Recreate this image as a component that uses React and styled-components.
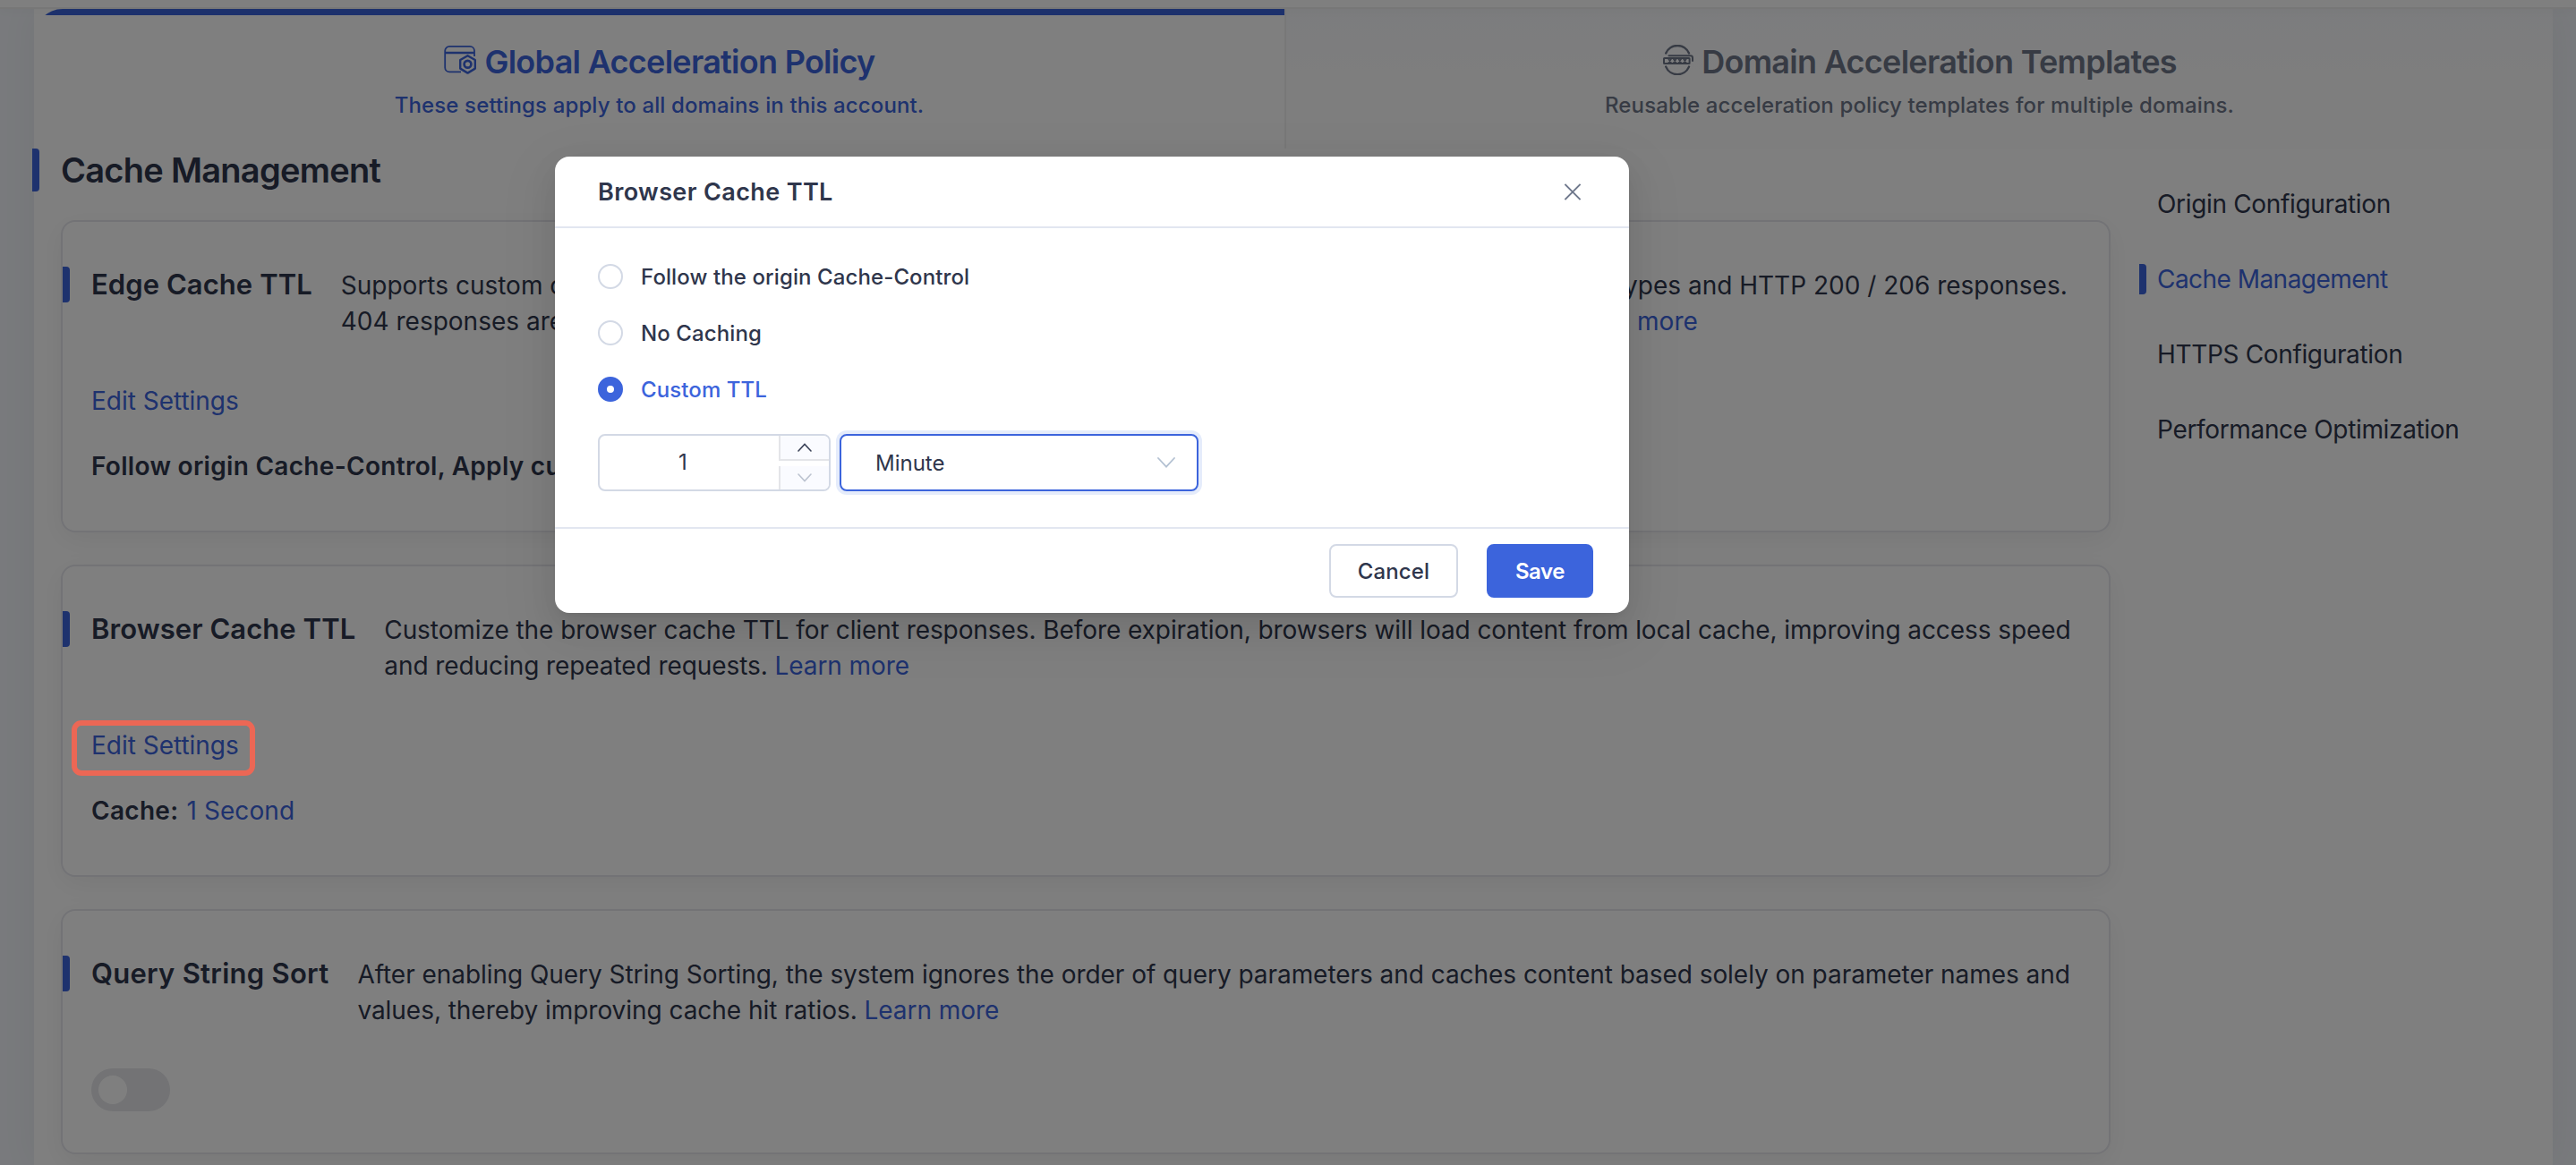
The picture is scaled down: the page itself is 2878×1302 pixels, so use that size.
import React from "react";
import styled, { createGlobalStyle } from "styled-components";

const BLUE = "#3c64dc";
const INK = "#2f364c";

const GlobalStyle = createGlobalStyle`
  *, *::before, *::after { box-sizing: border-box; }
  html, body { margin: 0; padding: 0; }
  body {
    font-family: Inter, Roboto, "Liberation Sans", sans-serif;
    color: ${INK};
    background: #f2f5fa;
    overflow: hidden;
  }
  button { font: inherit; padding: 0; cursor: pointer; }
`;

const Page = styled.div`
  position: relative;
  height: 1302px;
  overflow: hidden;
  display: flex;
  flex-direction: column;
`;

const TopStrip = styled.header`
  position: relative;
  z-index: 1;
  flex: none;
  height: 10px;
  background: #fff;
  border-bottom: 2px solid #efefef;
  box-shadow: 0 2px 12px rgba(0, 0, 0, 0.03);
`;

const Panel = styled.main`
  flex: 1;
  margin: 0 26px 0 38px;
  background: #fff;
  box-shadow: 0 0 40px rgba(0, 0, 0, 0.05);
`;

const Tabs = styled.div`
  display: grid;
  grid-template-columns: 1399px 1fr;
  height: 156px;
`;

const Tab = styled.div`
  display: flex;
  flex-direction: column;
  align-items: center;
  color: ${(p) => (p.$active ? BLUE : "#6f7789")};
  background: ${(p) => (p.$active ? "#fff" : "linear-gradient(#f8f9fc, #fcfcfd 45%, #fdfdfd)")};
  border-right: ${(p) => (p.$active ? "2px solid #f1f1f1" : "0")};
  border-top-left-radius: ${(p) => (p.$active ? "32px" : "0")};
  overflow: hidden;
`;

const TabBar = styled.div`
  align-self: stretch;
  height: 7px;
  background: ${(p) => (p.$active ? BLUE : "transparent")};
`;

const TabTitle = styled.div`
  display: flex;
  align-items: center;
  margin-top: 30px;
  height: 44px;
  gap: 8px;
  font-size: 36px;
  font-weight: 600;
  letter-spacing: -0.72px;
  white-space: nowrap;
  svg { display: block; margin-top: -4px; }
`;

const TabNote = styled.div`
  margin-top: 12px;
  line-height: 30px;
  font-size: 24px;
  font-weight: 500;
  letter-spacing: 0.13px;
  white-space: nowrap;
`;

const Body = styled.div`
  display: flex;
  align-items: flex-start;
`;

const Content = styled.section`
  width: 2320px;
  flex: none;
`;

const SectionTitle = styled.h2`
  display: flex;
  align-items: center;
  gap: 24px;
  height: 48px;
  margin: 0 0 32px -2px;
  font-size: 38px;
  font-weight: 600;
  letter-spacing: -0.73px;
  line-height: 48px;
`;

const Marker = styled.span`
  flex: none;
  width: 8px;
  height: ${(p) => p.$h}px;
  background: ${BLUE};
  border-radius: 0 4px 4px 0;
`;

const CardList = styled.div`
  display: flex;
  flex-direction: column;
  gap: 36px;
  margin-left: 30px;
`;

const Card = styled.article`
  background: #fff;
  border: 2px solid #e6e7ed;
  border-radius: 16px;
  padding: 50px 0 46px;
  box-shadow: 0 8px 30px rgba(0, 0, 0, 0.06);
`;

const CardHead = styled.div`
  display: flex;
  align-items: flex-start;
  height: 80px;
  margin-bottom: 46px;
`;

const CardTitle = styled.h3`
  margin: 0 32px 0 24px;
  font-size: 31px;
  line-height: 40px;
  font-weight: 600;
  letter-spacing: ${(p) => p.$track || 0}px;
  white-space: nowrap;
`;

const CardText = styled.p`
  margin: 1px 0 0;
  width: ${(p) => p.$w}px;
  font-size: 28px;
  line-height: 40px;
  letter-spacing: ${(p) => p.$track || 0}px;
  white-space: nowrap;
`;

const SplitLine = styled.span`
  display: flex;
  justify-content: space-between;
  width: ${(p) => p.$w}px;
`;

const Link = styled.a`
  color: ${BLUE};
`;

const CardBody = styled.div`
  padding-left: 32px;
  font-size: 28px;
`;

const Action = styled.div`
  display: flex;
  align-items: center;
  height: 48px;
  color: ${BLUE};
  letter-spacing: -0.02px;
`;

const Summary = styled.div`
  display: flex;
  align-items: center;
  gap: 9px;
  height: 51px;
  margin-top: 24px;
  padding-bottom: 2px;
  white-space: nowrap;
  b { font-weight: 600; letter-spacing: 0.3px; }
  span { color: ${BLUE}; letter-spacing: 0.08px; }
`;

const Toggle = styled.div`
  width: 88px;
  height: 48px;
  padding: 8px;
  border-radius: 24px;
  background: #e6e7ea;
  &::before {
    content: "";
    display: block;
    width: 32px;
    height: 32px;
    border-radius: 50%;
    background: #fff;
  }
`;

const SideNav = styled.nav`
  display: flex;
  flex-direction: column;
  margin: 20px 0 0 32px;
`;

const NavItem = styled.div`
  display: flex;
  align-items: center;
  gap: 12px;
  height: 84px;
  font-size: 28px;
  letter-spacing: ${(p) => (p.$active ? -0.54 : -0.34)}px;
  color: ${(p) => (p.$active ? BLUE : INK)};
  ${Marker} { visibility: ${(p) => (p.$active ? "visible" : "hidden")}; }
`;

const Mask = styled.div`
  position: absolute;
  inset: 0;
  z-index: 10;
  display: flex;
  align-items: flex-start;
  background: rgba(0, 0, 0, 0.5);
`;

const Highlight = styled.div`
  position: absolute;
  left: 80px;
  top: 805px;
  width: 205px;
  height: 62px;
  border: 6px solid #ec6755;
  border-radius: 11px;
`;

const Dialog = styled.div`
  width: 1200px;
  margin: 175px 0 0 620px;
  background: #fff;
  border-radius: 16px;
  box-shadow: 0 12px 32px rgba(0, 0, 0, 0.08), 0 6px 12px -8px rgba(0, 0, 0, 0.12),
    0 18px 56px 16px rgba(0, 0, 0, 0.05);
`;

const DialogHead = styled.div`
  display: flex;
  align-items: center;
  justify-content: space-between;
  height: 80px;
  padding: 0 52px 0 48px;
  border-bottom: 2px solid #e2e6f0;
  font-size: 27px;
  font-weight: 600;
  letter-spacing: 0.38px;
`;

const CloseButton = styled.button`
  display: flex;
  border: 0;
  background: none;
`;

const DialogBody = styled.div`
  height: 334px;
  padding: 38px 48px 0;
`;

const Radio = styled.label`
  display: flex;
  align-items: center;
  gap: 20px;
  height: 32px;
  margin-bottom: 31px;
  font-size: 24px;
  font-weight: 500;
  letter-spacing: 0.1px;
  color: ${(p) => (p.$on ? BLUE : INK)};
`;

const Dot = styled.span`
  width: 28px;
  height: 28px;
  border-radius: 50%;
  border: ${(p) => (p.$on ? `10px solid ${BLUE}` : "2px solid #d3d9e5")};
  background: #fff;
`;

const Fields = styled.div`
  display: flex;
  gap: 10px;
  margin-top: 34px;
`;

const NumberField = styled.div`
  display: flex;
  width: 260px;
  height: 64px;
  border: 2px solid #d3d9e5;
  border-radius: 8px;
  overflow: hidden;
`;

const NumberValue = styled.div`
  flex: 1;
  padding-right: 14px;
  line-height: 60px;
  text-align: center;
  font-size: 24px;
`;

const Steps = styled.div`
  display: flex;
  flex-direction: column;
  justify-content: space-between;
  width: 56px;
`;

const Step = styled.div`
  display: flex;
  align-items: center;
  justify-content: center;
  height: ${(p) => (p.$up ? 28 : 26)}px;
  background: #fafbff;
  border-left: 2px solid #e4e5e9;
  border-bottom: ${(p) => (p.$up ? "2px solid #e4e5e9" : "0")};
`;

const Select = styled.div`
  display: flex;
  align-items: center;
  justify-content: space-between;
  width: 401px;
  height: 64px;
  padding: 0 24px 0 38px;
  border: 2px solid ${BLUE};
  border-radius: 8px;
  box-shadow: 0 0 0 4px #e5ecfb;
  font-size: 24px;
`;

const DialogFoot = styled.div`
  display: flex;
  justify-content: flex-end;
  gap: 32px;
  height: 96px;
  padding: 17px 40px 0;
  border-top: 2px solid #e2e6f0;
`;

const Button = styled.button`
  width: ${(p) => (p.$primary ? 119 : 144)}px;
  height: 60px;
  border-radius: 8px;
  border: 2px solid ${(p) => (p.$primary ? BLUE : "#d3d9e5")};
  background: ${(p) => (p.$primary ? BLUE : "#fff")};
  color: ${(p) => (p.$primary ? "#fff" : INK)};
  font-size: 24px;
  font-weight: ${(p) => (p.$primary ? 600 : 500)};
  letter-spacing: ${(p) => (p.$primary ? -0.4 : 0.13)}px;
`;

const PolicyIcon = () => (
  <svg width="38" height="34" viewBox="0 0 38 34" fill="none" stroke="currentColor">
    <path d="M20 30.4H7.2A5 5 0 0 1 2.2 25.4V6.8A5 5 0 0 1 7.2 1.8H30A5 5 0 0 1 35 6.8V13" strokeWidth="1.8" />
    <path d="M2.2 9H35" strokeWidth="2.4" />
    <path d="M27.5 12.2L35.8 17V26.6L27.5 31.6L19.2 26.6V17Z" strokeWidth="2.4" strokeLinejoin="round" />
    <circle cx="27.5" cy="21.8" r="3.9" strokeWidth="2.7" />
  </svg>
);

const TemplateIcon = () => (
  <svg width="36" height="34" viewBox="0 0 36 34" fill="none" stroke="currentColor">
    <path d="M4.2 9.5A14 14 0 0 1 30 9.5M4.2 24.6A14 14 0 0 0 30 24.6" strokeWidth="2.4" strokeLinecap="round" />
    <path d="M7.5 12.3H31.6Q34 12.3 34 14.7V18" strokeWidth="2" strokeLinecap="round" />
    <rect x="2" y="15" width="28.6" height="6" rx="0.6" strokeWidth="2" />
    <path d="M7 15.8L10.2 20.4M10.2 15.8L7 20.4M12.6 15.8L15.8 20.4M15.8 15.8L12.6 20.4M18.2 15.8L21.4 20.4M21.4 15.8L18.2 20.4M23.8 15.8L27 20.4M27 15.8L23.8 20.4" strokeWidth="1.6" />
  </svg>
);

const Chevron = ({ up, w, h, color, stroke = 1.6 }) => (
  <svg width={w} height={h} viewBox={`0 0 ${w} ${h}`} fill="none" stroke={color} strokeWidth={stroke}>
    <path d={up ? `M1 ${h - 1}L${w / 2} 1.4L${w - 1} ${h - 1}` : `M1 1L${w / 2} ${h - 1.4}L${w - 1} 1`} strokeLinecap="round" />
  </svg>
);

const NAV = ["Origin Configuration", "Cache Management", "HTTPS Configuration", "Performance Optimization"];
const RADIOS = ["Follow the origin Cache-Control", "No Caching", "Custom TTL"];

export default function App() {
  return (
    <Page>
      <GlobalStyle />
      <TopStrip />
      <Panel>
        <Tabs>
          <Tab $active>
            <TabBar $active />
            <TabTitle><PolicyIcon />Global Acceleration Policy</TabTitle>
            <TabNote>These settings apply to all domains in this account.</TabNote>
          </Tab>
          <Tab>
            <TabBar />
            <TabTitle><TemplateIcon />Domain Acceleration Templates</TabTitle>
            <TabNote>Reusable acceleration policy templates for multiple domains.</TabNote>
          </Tab>
        </Tabs>
        <Body>
          <Content>
            <SectionTitle><Marker $h={48} />Cache Management</SectionTitle>
            <CardList>
              <Card>
                <CardHead>
                  <Marker $h={40} />
                  <CardTitle $track={0.06}>Edge Cache TTL</CardTitle>
                  <CardText $w={1930}>
                    <SplitLine $w={1929}>
                      <span>Supports custom cache rules by directory and file extension,</span>
                      <span>including all file types and HTTP 200 / 206 responses.</span>
                    </SplitLine>
                    <SplitLine $w={1516}>
                      <span>404 responses are not cached by default.</span>
                      <Link>Learn more</Link>
                    </SplitLine>
                  </CardText>
                </CardHead>
                <CardBody>
                  <Action>Edit Settings</Action>
                  <Summary><b>Follow origin Cache-Control, Apply custom rules</b></Summary>
                </CardBody>
              </Card>
              <Card>
                <CardHead>
                  <Marker $h={40} />
                  <CardTitle $track={0.06}>Browser Cache TTL</CardTitle>
                  <CardText $w={1885} $track={-0.077}>
                    Customize the browser cache TTL for client responses. Before expiration, browsers will load content from local cache, improving access speed
                    <br />
                    and reducing repeated requests. <Link>Learn more</Link>
                  </CardText>
                </CardHead>
                <CardBody>
                  <Action>Edit Settings</Action>
                  <Summary><b>Cache:</b><span>1 Second</span></Summary>
                </CardBody>
              </Card>
              <Card>
                <CardHead>
                  <Marker $h={40} />
                  <CardTitle $track={0.26}>Query String Sort</CardTitle>
                  <CardText $w={1915} $track={-0.045}>
                    After enabling Query String Sorting, the system ignores the order of query parameters and caches content based solely on parameter names and
                    <br />
                    values, thereby improving cache hit ratios. <Link>Learn more</Link>
                  </CardText>
                </CardHead>
                <CardBody><Toggle /></CardBody>
              </Card>
            </CardList>
          </Content>
          <SideNav>
            {NAV.map((t, i) => (
              <NavItem key={t} $active={i === 1}><Marker $h={34} />{t}</NavItem>
            ))}
          </SideNav>
        </Body>
      </Panel>
      <Mask>
        <Highlight />
        <Dialog>
          <DialogHead>
            Browser Cache TTL
            <CloseButton>
              <svg width="22" height="22" viewBox="0 0 22 22" fill="none" stroke="#6f788c" strokeWidth="2">
                <path d="M2.4 2.9L19.6 20.1M19.6 2.9L2.4 20.1" />
              </svg>
            </CloseButton>
          </DialogHead>
          <DialogBody>
            {RADIOS.map((t, i) => (
              <Radio key={t} $on={i === 2}><Dot $on={i === 2} />{t}</Radio>
            ))}
            <Fields>
              <NumberField>
                <NumberValue>1</NumberValue>
                <Steps>
                  <Step $up><Chevron up w={16} h={10} color="#3a4258" /></Step>
                  <Step><Chevron w={16} h={10} color="#bcc3d0" /></Step>
                </Steps>
              </NumberField>
              <Select>Minute<Chevron w={20} h={12} color="#b3c1d2" stroke={1.8} /></Select>
            </Fields>
          </DialogBody>
          <DialogFoot>
            <Button>Cancel</Button>
            <Button $primary>Save</Button>
          </DialogFoot>
        </Dialog>
      </Mask>
    </Page>
  );
}
